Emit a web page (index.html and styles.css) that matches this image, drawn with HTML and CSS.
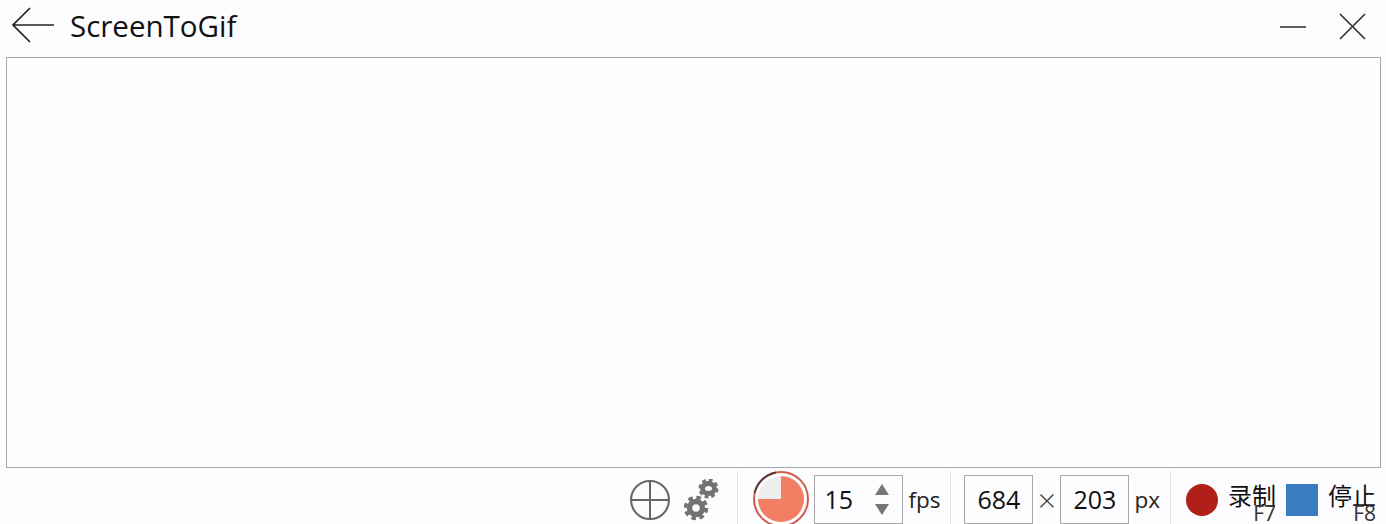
FILE: index.html
```html
<!DOCTYPE html>
<html lang="zh-CN">
<head>
    <meta charset="UTF-8">
    <title>ScreenToGif</title>
    <link rel="stylesheet" href="styles.css">
</head>
<body>
    <header class="title-bar">
        <svg class="back-icon" width="44" height="36" viewBox="0 0 44 36">
            <path d="M43 18H2M19 1 2 18l17 17" fill="none" stroke="#222" stroke-width="1.7"/>
        </svg>
        <h1 class="title">ScreenToGif</h1>
        <svg class="minimize-icon" width="26" height="4" viewBox="0 0 26 4">
            <path d="M0 2H26" stroke="#444" stroke-width="1.7"/>
        </svg>
        <svg class="close-icon" width="27" height="27" viewBox="0 0 27 27">
            <path d="M1 1 26 26M26 1 1 26" stroke="#333" stroke-width="1.7"/>
        </svg>
    </header>

    <main class="capture-area"></main>

    <footer class="toolbar">
        <div class="group group-tools">
            <svg width="40" height="40" viewBox="0 0 40 40">
                <circle cx="20" cy="20" r="19" fill="none" stroke="#666" stroke-width="2"/>
                <path d="M20 1V39M1 20H39" stroke="#666" stroke-width="2"/>
            </svg>
            <svg width="36" height="42" viewBox="0 0 36 42">
                <g fill="none" stroke="#737373">
                    <circle cx="12" cy="29" r="6.5" stroke-width="5.5"/>
                    <circle cx="12" cy="29" r="10.5" stroke-width="3.5" stroke-dasharray="4.6 3.65"/>
                    <ellipse cx="24.500" cy="9.500" rx="6" ry="5" stroke-width="5"/>
                    <circle cx="24.500" cy="9.500" r="8.500" stroke-width="3" stroke-dasharray="3.800 2.870"/>
                </g>
            </svg>
        </div>

        <div class="group group-fps">
            <svg class="timer" width="58" height="58" viewBox="0 0 58 58">
                <circle cx="29" cy="28" r="27" fill="#fdfcfe" stroke="#cf5c48" stroke-width="2"/>
                <path d="M2.600 22A27 27 0 0 1 24 1.500" fill="none" stroke="#5a3c44" stroke-width="2"/>
                <circle cx="29" cy="28" r="23" fill="#efeeef"/>
                <path d="M29 5A23 23 0 1 1 6 28H29Z" fill="#f27f63"/>
            </svg>
            <div class="field field-fps">
                <span>15</span>
                <span class="spinner">
                    <i class="arrow arrow-up"></i>
                    <i class="arrow arrow-down"></i>
                </span>
            </div>
            <span class="unit">fps</span>
        </div>

        <div class="group group-size">
            <div class="field field-size">684</div>
            <span class="times">×</span>
            <div class="field field-size">203</div>
            <span class="unit">px</span>
        </div>

        <div class="group group-actions">
            <button class="action">
                <i class="dot"></i>
                <span class="label">录制</span>
                <span class="key">F7</span>
            </button>
            <button class="action">
                <i class="square"></i>
                <span class="label">停止</span>
                <span class="key">F8</span>
            </button>
        </div>
    </footer>
</body>
</html>
```

FILE: styles.css
```css
html, body {
    margin: 0;
    height: 524px;
    overflow: hidden;
}

body {
    display: flex;
    flex-direction: column;
    background-color: #fdfcfe;
    color: #111;
    font-family: "Open Sans", "Noto Sans CJK SC", sans-serif;
}

.title-bar {
    display: flex;
    align-items: center;
    height: 57px;
    padding: 0 20px 6px 11px;
    box-sizing: border-box;
}

.back-icon {
    margin-bottom: 2px;
}

.title {
    flex: 1;
    margin: 0 0 0 15px;
    font-size: 29.500px;
    font-weight: 400;
}

.minimize-icon {
    margin-top: 3px;
}

.close-icon {
    margin: 2px 0 0 33px;
}

.capture-area {
    height: 409px;
    margin: 0 5px 0 6px;
    border: 1px solid #a8a8a8;
    background-color: #fdfcfe;
}

.toolbar {
    flex: 1;
    display: flex;
    justify-content: flex-end;
    padding: 3px 10px 0 0;
}

.group {
    display: flex;
    align-items: center;
    height: 53px;
    border-left: 1px solid #e2e2e2;
}

.group-tools {
    gap: 14px;
    padding: 5px 17px 0 0;
    box-sizing: border-box;
    border-left: none;
}

.group-fps {
    padding: 0 10px 0 14px;
}

.group-size {
    padding: 0 10px 0 13px;
}

.group-actions {
    gap: 10px;
    padding-left: 15px;
}

.timer {
    margin: 4px 4px 0 0;
}

.field {
    display: flex;
    align-items: center;
    box-sizing: border-box;
    height: 49px;
    margin-top: 3px;
    border: 1px solid #a8a8a8;
    font-size: 25px;
}

.field-fps {
    justify-content: space-between;
    width: 89px;
    padding: 0 13px 0 9px;
}

.field-size {
    justify-content: center;
    width: 69px;
}

.spinner {
    display: flex;
    flex-direction: column;
    gap: 9px;
}

.arrow {
    display: block;
    width: 0;
    height: 0;
    border-left: 7px solid transparent;
    border-right: 7px solid transparent;
}

.arrow-up {
    border-bottom: 11px solid #777;
}

.arrow-down {
    border-top: 11px solid #777;
}

.unit {
    margin: 3px 0 0 5px;
    font-size: 22.500px;
    color: #222;
}

.times {
    width: 27px;
    margin-top: 3px;
    text-align: center;
    font-size: 32px;
    font-weight: 300;
    color: #444;
}

.action {
    position: relative;
    display: flex;
    align-items: center;
    gap: 10px;
    margin-top: 4px;
    padding: 0;
    border: none;
    background: none;
    color: inherit;
    font-family: inherit;
}

.dot {
    width: 32px;
    height: 32px;
    border-radius: 50%;
    background-color: #b02018;
}

.square {
    width: 32px;
    height: 32px;
    background-color: #3a7dbf;
}

.label {
    font-size: 24px;
    line-height: 30px;
    margin-bottom: 8px;
}

.key {
    position: absolute;
    right: 0;
    bottom: -6px;
    font-size: 21px;
    line-height: 24px;
    color: #333;
}
```
